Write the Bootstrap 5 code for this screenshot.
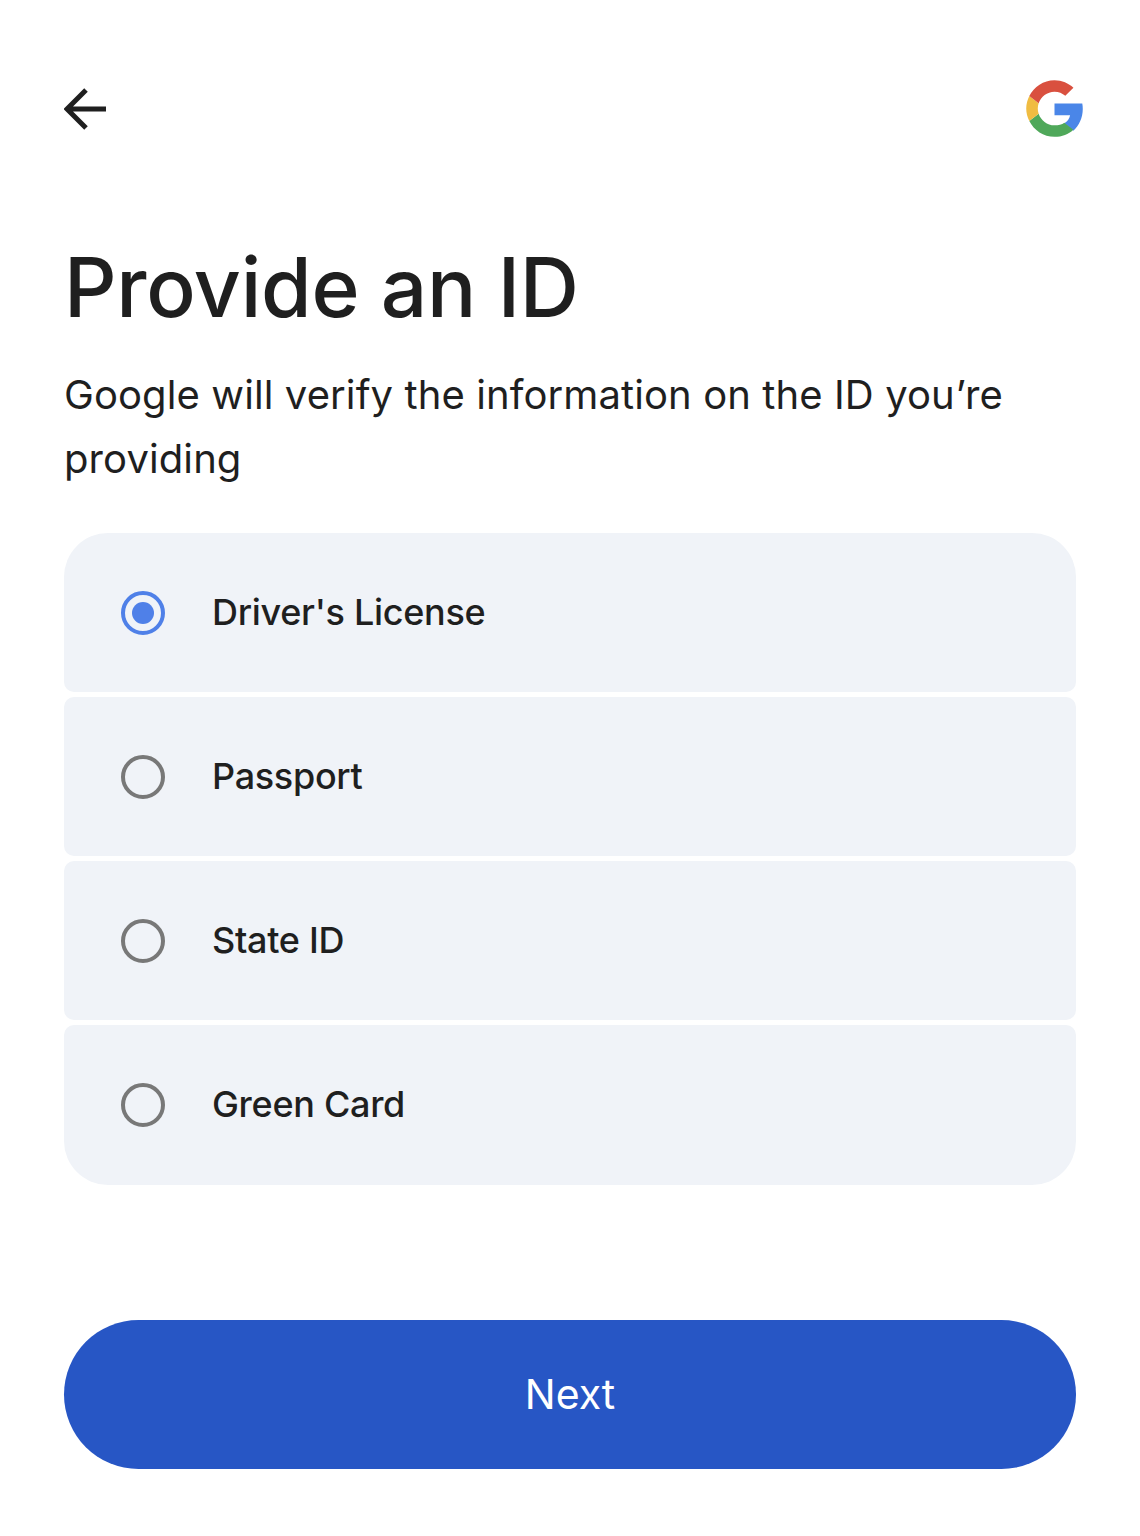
<!DOCTYPE html>
<html lang="en">
<head>
    <meta charset="UTF-8">
    <meta name="viewport" content="width=device-width, initial-scale=1.0">
    <title>Provide an ID</title>
    <link href="https://cdn.jsdelivr.net/npm/bootstrap@5.3.0/dist/css/bootstrap.min.css" rel="stylesheet">
    <style>
        body {
            background: #fff;
            color: #1f1f1f;
            font-family: "Inter", "Noto Sans", sans-serif;
        }
        .screen {
            width: 1140px;
            height: 1536px;
            padding: 79px 64px 0;
        }
        .top-row {
            height: 59px;
            margin-right: -8px;
        }
        .page-title {
            font-size: 82px;
            line-height: 96px;
            font-weight: 450;
            margin: 102px 0 0;
            letter-spacing: -0.3px;
        }
        .page-sub {
            font-size: 40px;
            line-height: 64px;
            margin: 27px 0 0;
            letter-spacing: 0.1px;
        }
        .id-options {
            margin-top: 42px;
            gap: 5px;
        }
        .id-option {
            height: 159px;
            background: #f0f3f8;
            border-radius: 10px;
            padding-left: 57px;
            gap: 47px;
            font-size: 36px;
            font-weight: 450;
            letter-spacing: -0.3px;
            padding-bottom: 2px;
        }
        .id-option:first-child {
            border-radius: 44px 44px 10px 10px;
        }
        .id-option:last-child {
            height: 160px;
            border-radius: 10px 10px 44px 44px;
        }
        .radio-mark {
            width: 44px;
            height: 44px;
            border: 4px solid #787878;
            border-radius: 50%;
            flex-shrink: 0;
            margin-top: 2px;
        }
        .radio-mark.on {
            border-color: #4f80e8;
        }
        .radio-mark.on::after {
            content: "";
            width: 22px;
            height: 22px;
            border-radius: 50%;
            background: #4f80e8;
        }
        .next-btn {
            display: block;
            width: 100%;
            height: 149px;
            margin-top: 135px;
            border-radius: 75px;
            background: #2756c5;
            color: #fff;
            font-size: 41px;
            border: 0;
        }
    </style>
</head>
<body>
    <div class="screen">
        <div class="top-row d-flex justify-content-between align-items-center">
            <svg width="44" height="44" viewBox="0 0 44 44" fill="none" stroke="#1f1f1f" stroke-width="5">
                <path d="M42 22H3M22 3 3 22l19 19"/>
            </svg>
            <svg width="59" height="59" viewBox="0 0 48 48">
                <path fill="#4a86e8" d="M47 24.500c0-1.600-.1-3.100-.4-4.500H24v9.500h12.700c-.6 2.900-2.200 5-4.700 6.500l7.300 6.200c4.600-4.200 7.700-10.400 7.700-17.700z"/>
                <path fill="#4fa85a" d="M24 47c6.200 0 11.400-2 15.300-5.800L32 35.500c-2 1.400-4.700 2.200-8 2.200-6 0-11.100-4.100-12.900-9.500l-7.600 5.900C7.300 41.700 15 47 24 47z"/>
                <path fill="#f0bc42" d="M11.100 28.200c-.5-1.400-.7-2.800-.7-4.200s.3-2.900.7-4.200l-7.600-5.900C2 17 1 20.400 1 24s.9 7 2.500 10.100z"/>
                <path fill="#d9503f" d="M24 10.300c3.400 0 6.400 1.200 8.800 3.400l6.600-6.600C35.400 3.400 30.200 1 24 1 15 1 7.300 6.300 3.500 13.900l7.600 5.900C12.900 14.400 18 10.300 24 10.300z"/>
            </svg>
        </div>
        <h1 class="page-title">Provide an ID</h1>
        <p class="page-sub">Google will verify the information on the ID you’re providing</p>
        <div class="id-options d-flex flex-column">
            <div class="id-option d-flex align-items-center"><span class="radio-mark on d-flex align-items-center justify-content-center"></span>Driver's License</div>
            <div class="id-option d-flex align-items-center"><span class="radio-mark"></span>Passport</div>
            <div class="id-option d-flex align-items-center"><span class="radio-mark"></span>State ID</div>
            <div class="id-option d-flex align-items-center"><span class="radio-mark"></span>Green Card</div>
        </div>
        <button type="button" class="btn next-btn">Next</button>
    </div>
    <script src="https://cdn.jsdelivr.net/npm/bootstrap@5.3.0/dist/js/bootstrap.bundle.min.js"></script>
</body>
</html>
